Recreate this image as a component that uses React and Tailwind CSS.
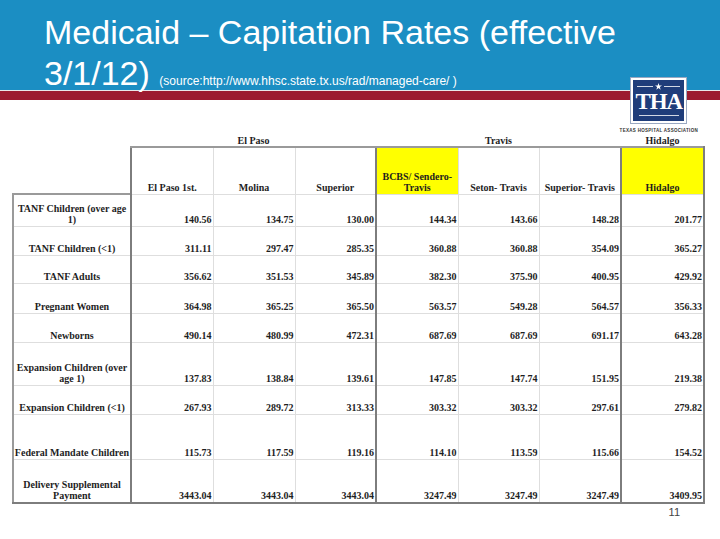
import React from "react";

const rows = [
  { label: ["TANF Children (over age", "1)"], h: 32, v: ["140.56", "134.75", "130.00", "144.34", "143.66", "148.28", "201.77"] },
  { label: ["TANF Children (<1)"], h: 29, v: ["311.11", "297.47", "285.35", "360.88", "360.88", "354.09", "365.27"] },
  { label: ["TANF Adults"], h: 28, v: ["356.62", "351.53", "345.89", "382.30", "375.90", "400.95", "429.92"] },
  { label: ["Pregnant Women"], h: 30, v: ["364.98", "365.25", "365.50", "563.57", "549.28", "564.57", "356.33"] },
  { label: ["Newborns"], h: 29, v: ["490.14", "480.99", "472.31", "687.69", "687.69", "691.17", "643.28"] },
  { label: ["Expansion Children (over", "age 1)"], h: 43, v: ["137.83", "138.84", "139.61", "147.85", "147.74", "151.95", "219.38"] },
  { label: ["Expansion Children (<1)"], h: 29, v: ["267.93", "289.72", "313.33", "303.32", "303.32", "297.61", "279.82"] },
  { label: ["Federal Mandate Children"], h: 45, v: ["115.73", "117.59", "119.16", "114.10", "113.59", "115.66", "154.52"] },
  { label: ["Delivery Supplemental", "Payment"], h: 44, v: ["3443.04", "3443.04", "3443.04", "3247.49", "3247.49", "3247.49", "3409.95"] },
];

const plans = [
  { name: ["El Paso 1st."], yellow: false },
  { name: ["Molina"], yellow: false },
  { name: ["Superior"], yellow: false },
  { name: ["BCBS/ Sendero-", "Travis"], yellow: true },
  { name: ["Seton- Travis"], yellow: false },
  { name: ["Superior- Travis"], yellow: false },
  { name: ["Hidalgo"], yellow: true },
];

// columns that open a county group get the heavy rule on the left
const groupStart = [0, 3, 6];

const cellBorder = (i) =>
  "border border-[#dedede] " +
  (groupStart.includes(i) ? "border-l-2 border-l-[#7d7d7d] " : "") +
  (i === 6 ? "border-r-2 border-r-[#7d7d7d] " : "");

const Logo = () => (
  <div className="absolute right-[22px] top-[78px] flex flex-col items-center">
    <div className="w-[55px] h-[45px] bg-[#1f3d7a] border-2 border-white shadow-[0_0_0_1px_#9aa9c2] flex flex-col items-center pt-[3px]">
      <div className="flex items-center gap-[2px] w-full px-[4px]">
        <div className="flex-1 h-px bg-white/80" />
        <svg width="7" height="7" viewBox="0 0 10 10">
          <path d="M5 0 L6.2 3.6 L10 3.6 L6.9 5.8 L8.1 9.5 L5 7.2 L1.9 9.5 L3.1 5.8 L0 3.6 L3.8 3.6 Z" fill="#fff" />
        </svg>
        <div className="flex-1 h-px bg-white/80" />
      </div>
      <div className="text-white font-bold text-[23px] leading-[24px] tracking-[-1px] font-['Liberation_Serif',serif]">THA</div>
      <div className="w-[40px] h-px bg-white/80 mt-[1px]" />
    </div>
    <div className="mt-[5px] text-[4.5px] font-bold tracking-[0.3px] text-[#333] whitespace-nowrap font-['Liberation_Sans',sans-serif]">
      TEXAS HOSPITAL ASSOCIATION
    </div>
  </div>
);

export default function App() {
  return (
    <div className="relative w-[720px] h-[539px] bg-white overflow-hidden font-['Liberation_Serif',serif]">
      <div className="h-[90px] bg-[#1b8ec3] pl-[44px] pt-[12px] text-white font-['Liberation_Sans',sans-serif]">
        <div className="text-[34px] leading-[41px]">Medicaid – Capitation Rates (effective</div>
        <div className="text-[34px] leading-[41px] whitespace-nowrap">
          3/1/12) <span className="text-[12px] leading-none">(source:http://www.hhsc.state.tx.us/rad/managed-care/ )</span>
        </div>
      </div>
      <div className="h-px bg-[#e9e9e9]" />
      <div className="h-[9px] bg-[#9c1b2f]" />
      <Logo />

      <table className="mt-[34px] ml-[12px] table-fixed border-collapse text-[10px] font-bold text-[#1e1e1e]">
        <colgroup>
          <col className="w-[118px]" />
          <col className="w-[82px]" />
          <col className="w-[82px]" />
          <col className="w-[81px]" />
          <col className="w-[82px]" />
          <col className="w-[81px]" />
          <col className="w-[82px]" />
          <col className="w-[83px]" />
        </colgroup>
        <tbody>
          <tr className="h-[13px] leading-[11px]">
            <td />
            <td colSpan={3} className="text-center align-bottom">El Paso</td>
            <td colSpan={3} className="text-center align-bottom">Travis</td>
            <td className="text-center align-bottom">Hidalgo</td>
          </tr>
          <tr className="h-[47px] leading-[11px]">
            <td className="border-0" />
            {plans.map((p, i) => (
              <td
                key={i}
                className={
                  cellBorder(i) +
                  "border-t-2 border-t-[#9a9a9a] text-center align-bottom pb-[1px] px-[1px] " +
                  (p.yellow ? "bg-[#ffff00]" : "")
                }
              >
                {p.name.map((n, k) => (
                  <div key={k} className="whitespace-nowrap">{n}</div>
                ))}
              </td>
            ))}
          </tr>
          {rows.map((r, ri) => {
            const last = ri === rows.length - 1;
            return (
              <tr key={ri} className="leading-[11px]" style={{ height: r.h }}>
                <td
                  className={
                    "border border-[#dedede] border-l-2 border-l-[#9a9a9a] text-center align-bottom pb-[1px] " +
                    (ri === 0 ? "border-t-2 border-t-[#9a9a9a] " : "") +
                    (last ? "border-b-2 border-b-[#7d7d7d]" : "")
                  }
                >
                  {r.label.map((l, k) => (
                    <div key={k} className="whitespace-nowrap">{l}</div>
                  ))}
                </td>
                {r.v.map((v, i) => (
                  <td
                    key={i}
                    className={
                      cellBorder(i) +
                      "text-right align-bottom pb-[1px] pr-[1px] " +
                      (last ? "border-b-2 border-b-[#7d7d7d]" : "")
                    }
                  >
                    {v}
                  </td>
                ))}
              </tr>
            );
          })}
        </tbody>
      </table>

      <div className="w-[680px] text-right text-[11px] leading-[12px] mt-[2px] text-[#444] font-['Liberation_Sans',sans-serif]">11</div>
    </div>
  );
}
